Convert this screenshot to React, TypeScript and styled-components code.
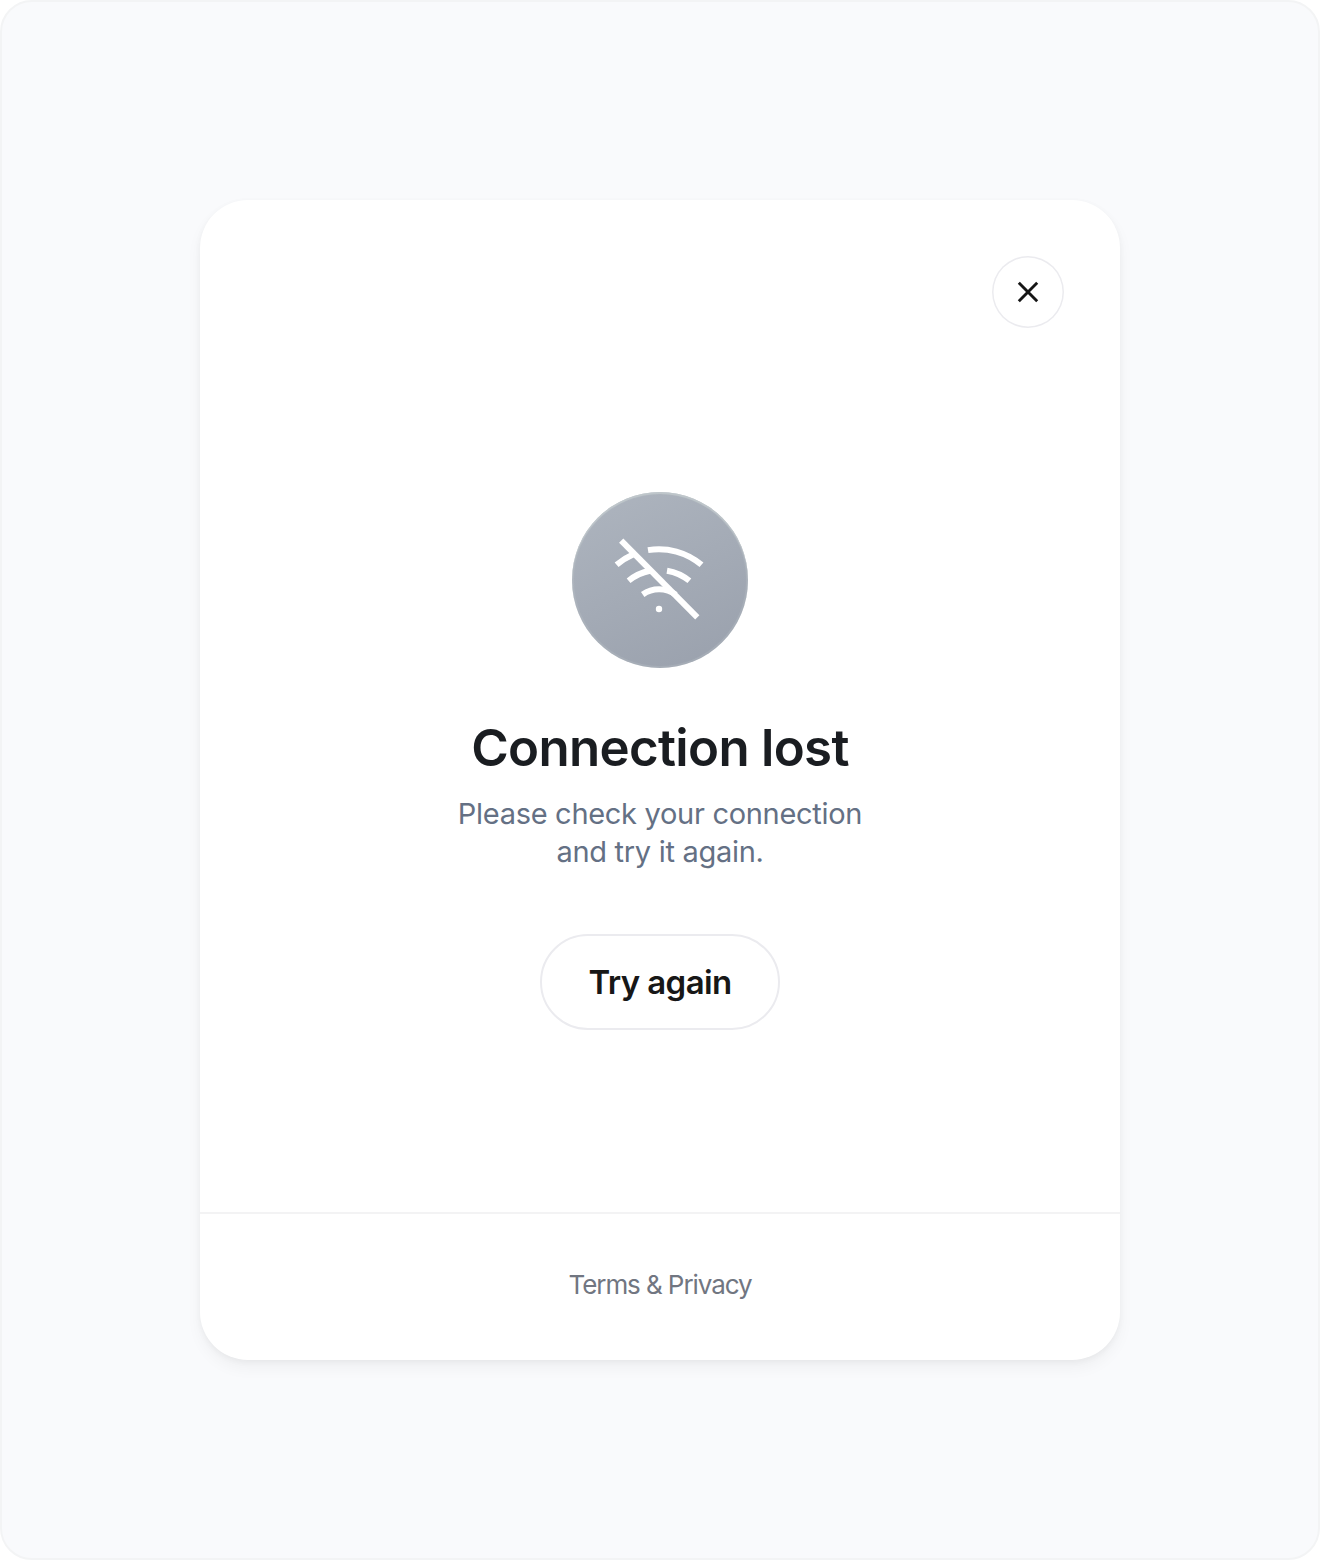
import React from "react";
import styled, { createGlobalStyle } from "styled-components";

const GlobalStyle = createGlobalStyle`
  *, *::before, *::after { box-sizing: border-box; }
  body { margin: 0; background: #fff; }
  button, h1, p { margin: 0; font: inherit; }
`;

const Stage = styled.main`
  display: flex;
  align-items: center;
  justify-content: center;
  width: 1320px;
  height: 1560px;
  border: 2px solid #f3f4f5;
  border-radius: 32px;
  background: #f9fafc;
  font-family: Inter, "Liberation Sans", sans-serif;
`;

const Dialog = styled.section`
  display: flex;
  flex-direction: column;
  width: 920px;
  height: 1160px;
  border-radius: 48px;
  background: #fff;
  box-shadow: 0 8px 16px rgba(20, 24, 32, 0.045), 0 2px 6px rgba(20, 24, 32, 0.045);
`;

const Header = styled.header`
  display: flex;
  justify-content: flex-end;
  padding: 56px 56px 0;
`;

const CloseButton = styled.button`
  display: grid;
  place-items: center;
  width: 72px;
  height: 72px;
  padding: 0;
  border: 0;
  border-radius: 50%;
  background: #fff;
  box-shadow: inset 0 0 0 1.5px #ebebef;
  color: #161616;
`;

const Body = styled.div`
  display: flex;
  flex: 1;
  flex-direction: column;
  align-items: center;
  padding-top: 164px;
`;

const StatusBadge = styled.div`
  display: grid;
  place-items: center;
  width: 176px;
  height: 176px;
  border-radius: 50%;
  background: linear-gradient(155deg, #adb4be 5%, #9aa1ad 95%);
  box-shadow: inset 0 2px 1px rgba(200, 207, 209, 0.65), inset 0 0 0 2px rgba(190, 198, 204, 0.25);
  color: #fff;
`;

const Title = styled.h1`
  margin-top: 48px;
  color: #1a1d21;
  font-size: 51px;
  font-weight: 600;
  line-height: 64px;
  letter-spacing: -0.68px;
`;

const Message = styled.p`
  margin-top: 15px;
  color: #647084;
  font-size: 29px;
  line-height: 38px;
  letter-spacing: -0.3px;
  text-align: center;
`;

const RetryButton = styled.button`
  width: 240px;
  height: 96px;
  margin-top: 63px;
  padding: 0;
  border: 2px solid #ebebef;
  border-radius: 48px;
  background: #fff;
  color: #171717;
  font-size: 33px;
  font-weight: 600;
  letter-spacing: -0.6px;
`;

const Footer = styled.footer`
  display: flex;
  align-items: center;
  justify-content: center;
  height: 148px;
  padding-bottom: 5px;
  border-top: 2px solid #f3f3f4;
  color: #717681;
  font-size: 26px;
  letter-spacing: -1.08px;
`;

const CloseIcon = () => (
  <svg width="24" height="24" viewBox="0 0 24 24" fill="none" stroke="currentColor" strokeWidth="2.9">
    <path d="M2.8 2.8 21.2 21.2M21.2 2.8 2.8 21.2" />
  </svg>
);

const WifiOffIcon = () => (
  <svg width="96" height="96" viewBox="612 532 96 96" fill="none" stroke="currentColor" strokeWidth="6">
    <path d="M621.2 540.7 697.3 617.3" />
    <path d="M648 550.1A66 66 0 0 1 701.5 564.8M616.6 564.8A66 66 0 0 1 633 554.5" />
    <path d="M667 570.7A47.7 47.7 0 0 1 689.4 580.8M628.6 580.8A47.7 47.7 0 0 1 650 570.8" />
    <path d="M642.7 594.5A28.5 28.5 0 0 1 675.8 594.8" />
    <circle cx="659" cy="609" r="3.2" fill="currentColor" stroke="none" />
  </svg>
);

export default function App() {
  return (
    <>
      <GlobalStyle />
      <Stage>
        <Dialog>
          <Header>
            <CloseButton aria-label="Close">
              <CloseIcon />
            </CloseButton>
          </Header>
          <Body>
            <StatusBadge>
              <WifiOffIcon />
            </StatusBadge>
            <Title>Connection lost</Title>
            <Message>
              Please check your connection
              <br />
              and try it again.
            </Message>
            <RetryButton>Try again</RetryButton>
          </Body>
          <Footer>Terms &amp; Privacy</Footer>
        </Dialog>
      </Stage>
    </>
  );
}
